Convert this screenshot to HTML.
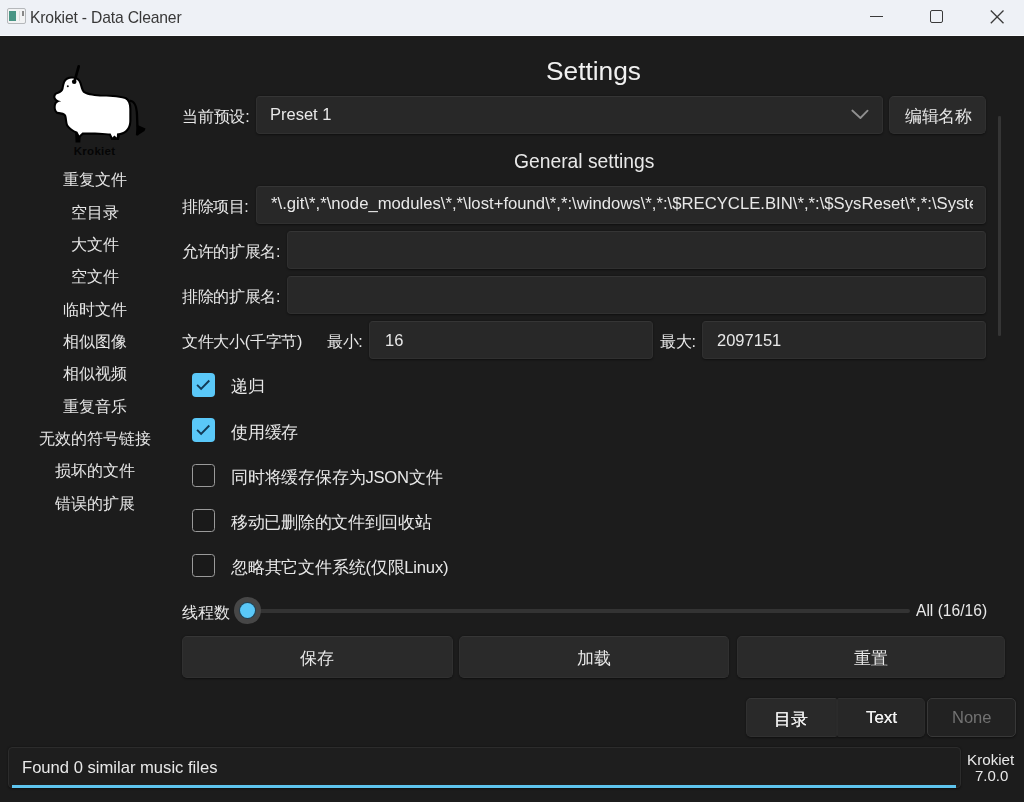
<!DOCTYPE html>
<html><head><meta charset="utf-8">
<style>
*{box-sizing:border-box;margin:0;padding:0}
html,body{width:1024px;height:802px;overflow:hidden;background:#1c1c1c;font-family:"Liberation Sans",sans-serif;color:#e8e8e8}
.abs{position:absolute}
.t{position:absolute;white-space:nowrap;line-height:1;will-change:transform}
#titlebar{position:absolute;left:0;top:0;width:1024px;height:36px;background:#eef1f6;border-bottom:1px solid #f9fafc}
.inp{position:absolute;background:#282828;border-radius:4px;border:1px solid #303030;border-top-color:#353535;overflow:hidden;box-shadow:0 0.5px 2px rgba(0,0,0,0.45)}
.btn{position:absolute;background:#2a2a2a;border-radius:5px;border:1px solid #303030;border-top-color:#363636;box-shadow:0 0.5px 2px rgba(0,0,0,0.45)}
.side{will-change:transform;position:absolute;left:0;width:190px;text-align:center;font-size:16px;color:#e6e6e6;white-space:nowrap;line-height:1}
.cb{position:absolute;left:192px;width:23.4px;height:23.6px;border-radius:4px}
.cb.on{background:#5ac8f8}
.cb.off{border:1.6px solid #9a9a9a;background:#1a1a1a;border-radius:3.5px}
.cb svg{position:absolute;left:0;top:0}
</style></head><body>
<div id="titlebar">
  <div class="abs" style="left:6.5px;top:7.8px;width:19.3px;height:16px;border:1px solid #b5b8bb;border-radius:2px;background:#f2f3f4"></div>
  <div class="abs" style="left:8.6px;top:11px;width:7.3px;height:10px;background:#4a9585"></div>
  <div class="abs" style="left:22.3px;top:11.3px;width:1.6px;height:5px;background:#888"></div><div class="abs" style="left:19px;top:11px;width:1px;height:10px;background:#dcdcdc"></div>
  <div class="t" style="left:29.7px;top:9.6px;font-size:15.7px;letter-spacing:-0.17px;color:#383838">Krokiet - Data Cleaner</div>
  <div class="abs" style="left:870px;top:16px;width:13px;height:1px;background:#3a3a3a"></div>
  <div class="abs" style="left:929.5px;top:10px;width:13px;height:13px;border:1.5px solid #3a3a3a;border-radius:2px"></div>
  <svg class="abs" style="left:988px;top:8px" width="18" height="18" viewBox="0 0 18 18"><path d="M2.8 2.5L15.5 15.3M15.5 2.5L2.8 15.3" stroke="#3a3a3a" stroke-width="1.3" fill="none"/></svg>
</div>
<svg class="abs" style="left:50px;top:60px" width="100" height="100" viewBox="0 0 100 100">
<path d="M 15 22.6 C 16 20, 19 18.6, 22 18.6 C 26 18.6, 28.5 20.5, 29.5 23.5 C 30.5 26.5, 31 30, 33 32.5 C 36 35, 42 35.8, 50 36.6 C 58 36.6, 68 37, 75 39 C 78 40.5, 79.3 44, 79.3 49 L 79.3 61 C 79.3 66, 77 70, 73 72 C 71 73, 69 73, 67 73.5 L 66.8 77.4 L 64.3 75.5 L 62.5 77.4 L 60.6 73.5 C 55 73, 45 72.4, 32.4 72.4 L 29.3 75.5 L 27.4 71.8 C 23 70, 20 68, 18.1 65 C 17 62, 17 57, 16 55 C 15 53, 12 52.5, 7.5 51.8 C 5.3 50, 5.3 46, 6.5 43.5 C 8 42, 10 41.5, 11.2 41.3 C 9 40.5, 6 40, 5.3 37 C 5.3 35, 7 33.8, 9 33.5 C 11 32.5, 13 31, 13.5 29 C 14 26, 14.5 24, 15 22.6 Z" fill="none" stroke="#000" stroke-width="4.2" stroke-linejoin="round"/>
<path d="M 25 71 L 31 72 L 30.3 82.5 L 25.6 82.5 Z" fill="#000"/>
<path d="M 60 75 L 70 75 L 69 80 L 61 80 Z" fill="#000"/>
<path d="M 15 22.6 C 16 20, 19 18.6, 22 18.6 C 26 18.6, 28.5 20.5, 29.5 23.5 C 30.5 26.5, 31 30, 33 32.5 C 36 35, 42 35.8, 50 36.6 C 58 36.6, 68 37, 75 39 C 78 40.5, 79.3 44, 79.3 49 L 79.3 61 C 79.3 66, 77 70, 73 72 C 71 73, 69 73, 67 73.5 L 66.8 77.4 L 64.3 75.5 L 62.5 77.4 L 60.6 73.5 C 55 73, 45 72.4, 32.4 72.4 L 29.3 75.5 L 27.4 71.8 C 23 70, 20 68, 18.1 65 C 17 62, 17 57, 16 55 C 15 53, 12 52.5, 7.5 51.8 C 5.3 50, 5.3 46, 6.5 43.5 C 8 42, 10 41.5, 11.2 41.3 C 9 40.5, 6 40, 5.3 37 C 5.3 35, 7 33.8, 9 33.5 C 11 32.5, 13 31, 13.5 29 C 14 26, 14.5 24, 15 22.6 Z" fill="#fff"/>
<path d="M 28.7 6.3 L 24.5 21.5" stroke="#000" stroke-width="2.7" stroke-linecap="round"/>
<circle cx="24.2" cy="21.8" r="2.3" fill="#000"/>
<circle cx="17.8" cy="26.3" r="1" fill="#111"/>
<path d="M 79.5 40.6 C 84.5 41, 86.6 45, 87 55 L 87.5 68 L 87 75.3" stroke="#000" stroke-width="2.3" fill="none"/>
<path d="M 86.5 64.5 L 95.5 68.5 L 94.5 71 L 87.5 75.5 Z" fill="#000"/>
<text x="44.6" y="94.5" text-anchor="middle" font-family="Liberation Sans" font-weight="bold" font-size="11.5" fill="#050505" letter-spacing="0.3">Krokiet</text>
</svg>
<div class="side" style="top:172.0px">重复文件</div>
<div class="side" style="top:204.5px">空目录</div>
<div class="side" style="top:237.0px">大文件</div>
<div class="side" style="top:269.0px">空文件</div>
<div class="side" style="top:301.5px">临时文件</div>
<div class="side" style="top:333.5px">相似图像</div>
<div class="side" style="top:366.0px">相似视频</div>
<div class="side" style="top:398.5px">重复音乐</div>
<div class="side" style="top:431.0px">无效的符号链接</div>
<div class="side" style="top:463.0px">损坏的文件</div>
<div class="side" style="top:495.5px">错误的扩展</div>

<div class="t" style="left:546px;top:58px;font-size:26.3px;color:#f0f0f0">Settings</div>

<div class="t" style="left:181.5px;top:109px;font-size:16px;letter-spacing:-0.2px">当前预设:</div>
<div class="inp" style="left:255.5px;top:95.5px;width:627px;height:38px"></div>
<div class="t" style="left:269.5px;top:106px;font-size:16.5px">Preset 1</div>
<svg class="abs" style="left:850px;top:108px" width="20" height="14" viewBox="0 0 20 14"><path d="M2.3 2.5L10.4 10L17.6 2.6" stroke="#909090" stroke-width="1.8" stroke-linecap="round" stroke-linejoin="round" fill="none"/></svg>
<div class="btn" style="left:888.5px;top:95.5px;width:97.5px;height:38px"></div>
<div class="t" style="left:904.5px;top:108px;font-size:16.5px;letter-spacing:-0.5px">编辑名称</div>
<div class="abs" style="left:998px;top:116px;width:2.6px;height:220px;background:#353535;border-radius:1.3px"></div>

<div class="t" style="left:514px;top:151.5px;font-size:19.3px">General settings</div>

<div class="t" style="left:182px;top:199px;font-size:16px;letter-spacing:-0.45px">排除项目:</div>
<div class="inp" style="left:255.5px;top:186px;width:730.5px;height:37.5px"></div>
<div class="t" style="left:270.5px;top:196px;font-size:16.7px;width:702px;overflow:hidden">*\.git\*,*\node_modules\*,*\lost+found\*,*:\windows\*,*:\$RECYCLE.BIN\*,*:\$SysReset\*,*:\System Volume Information\*</div>

<div class="t" style="left:182px;top:244px;font-size:16px;letter-spacing:-0.35px">允许的扩展名:</div>
<div class="inp" style="left:286.5px;top:231px;width:699.5px;height:37.5px"></div>
<div class="t" style="left:182px;top:289px;font-size:16px;letter-spacing:-0.35px">排除的扩展名:</div>
<div class="inp" style="left:286.5px;top:276px;width:699.5px;height:37.5px"></div>

<div class="t" style="left:182px;top:334px;font-size:16px;letter-spacing:-0.3px">文件大小(千字节)</div>
<div class="t" style="left:326.5px;top:334px;font-size:16px;letter-spacing:-0.4px">最小:</div>
<div class="inp" style="left:368.5px;top:321px;width:284.5px;height:38px"></div>
<div class="t" style="left:385px;top:331.7px;font-size:16.5px">16</div>
<div class="t" style="left:659.5px;top:334px;font-size:16px;letter-spacing:-0.3px">最大:</div>
<div class="inp" style="left:702px;top:321px;width:284px;height:38px"></div>
<div class="t" style="left:717px;top:331.7px;font-size:16.5px">2097151</div>

<div class="cb on" style="top:373.2px"><svg width="24" height="24" viewBox="0 0 24 24"><path d="M5.1 11.9L9.1 15.9L17.3 7.5" stroke="#113a55" stroke-width="1.9" fill="none"/></svg></div>
<div class="t" style="left:231px;top:379px;font-size:16.6px;letter-spacing:-0.2px">递归</div>
<div class="cb on" style="top:418.4px"><svg width="24" height="24" viewBox="0 0 24 24"><path d="M5.1 11.9L9.1 15.9L17.3 7.5" stroke="#113a55" stroke-width="1.9" fill="none"/></svg></div>
<div class="t" style="left:231px;top:424.5px;font-size:16.6px;letter-spacing:-0.2px">使用缓存</div>
<div class="cb off" style="top:463.5px"></div>
<div class="t" style="left:231px;top:469.5px;font-size:16.6px;letter-spacing:-0.2px">同时将缓存保存为JSON文件</div>
<div class="cb off" style="top:508.5px"></div>
<div class="t" style="left:231px;top:514.5px;font-size:16.6px;letter-spacing:-0.3px">移动已删除的文件到回收站</div>
<div class="cb off" style="top:553.5px"></div>
<div class="t" style="left:231px;top:559.5px;font-size:16.6px;letter-spacing:-0.2px">忽略其它文件系统(仅限Linux)</div>

<div class="t" style="left:182px;top:604.5px;font-size:15.8px">线程数</div>
<div class="abs" style="left:256px;top:608.5px;width:654px;height:4px;background:#333;border-radius:2px"></div>
<div class="abs" style="left:234.4px;top:597.3px;width:26.4px;height:26.4px;border-radius:50%;background:#474747"></div>
<div class="abs" style="left:239.8px;top:602.7px;width:15.6px;height:15.6px;border-radius:50%;background:#5ac8f8;box-shadow:0 0 0 1px #1f4256"></div>
<div class="t" style="left:915.5px;top:603px;font-size:15.6px">All (16/16)</div>

<div class="btn" style="left:182px;top:636px;width:270.5px;height:41.5px"></div>
<div class="t" style="left:182px;top:650.2px;width:270.5px;text-align:center;font-size:16.5px">保存</div>
<div class="btn" style="left:459px;top:636px;width:269.5px;height:41.5px"></div>
<div class="t" style="left:459px;top:650.2px;width:269.5px;text-align:center;font-size:16.5px">加载</div>
<div class="btn" style="left:736.5px;top:636px;width:268.5px;height:41.5px"></div>
<div class="t" style="left:736.5px;top:650.2px;width:268.5px;text-align:center;font-size:16.5px">重置</div>

<div class="btn" style="left:745.5px;top:698px;width:91px;height:38.5px;background:#292929;border-radius:5px 2px 2px 5px"></div>
<div class="t" style="left:745.5px;top:710.7px;width:90px;text-align:center;font-size:16.5px;color:#f0f0f0;text-shadow:0.15px 0 0 #f0f0f0">目录</div>
<div class="btn" style="left:836.5px;top:698px;width:88.5px;height:38.5px;background:#272727;border-color:#2b2b2b;border-top-color:#303030;border-radius:2px 5px 5px 2px"></div>
<div class="t" style="left:837.5px;top:709px;width:87px;text-align:center;font-size:17px;color:#f2f2f2;text-shadow:0.15px 0 0 #f2f2f2">Text</div>
<div class="btn" style="left:926.5px;top:698px;width:89.5px;height:38.5px;background:#222;border-color:#383838"></div>
<div class="t" style="left:926.5px;top:709px;width:89.5px;text-align:center;font-size:16.5px;color:#727272">None</div>

<div class="inp" style="left:7.5px;top:747.3px;width:953px;height:40.5px;background:#1e1e1e;border-color:#2c2c2c"></div>
<div class="abs" style="left:11.7px;top:785.3px;width:944px;height:3px;background:#5ec4ee"></div>
<div class="t" style="left:22px;top:760.2px;font-size:16.6px">Found 0 similar music files</div>
<div class="t" style="left:967px;top:751.5px;font-size:15.2px">Krokiet</div>
<div class="t" style="left:975px;top:768px;font-size:15px">7.0.0</div>
</body></html>
